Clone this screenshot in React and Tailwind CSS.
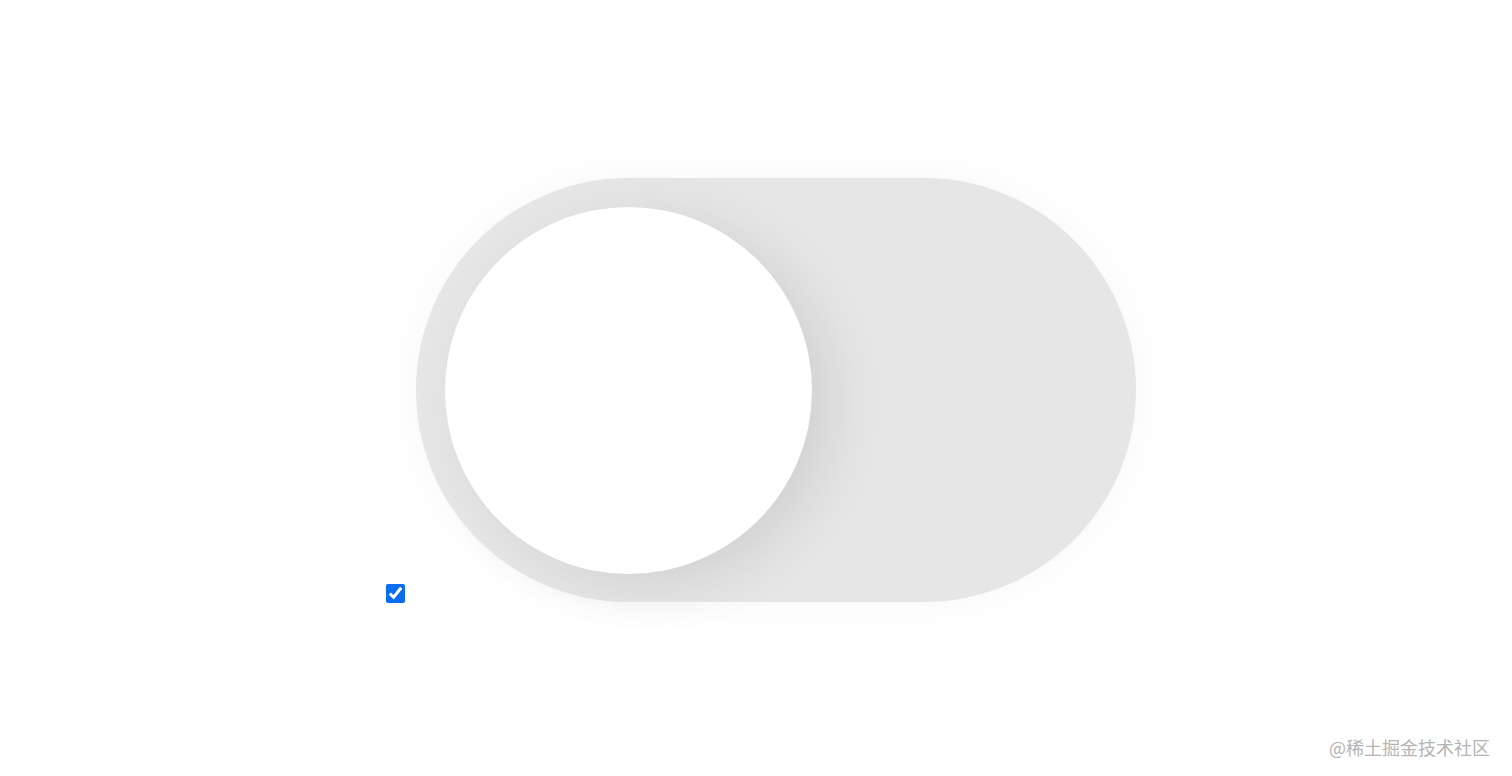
import React, { useState } from 'react';

export default function App() {
  const [on, setOn] = useState(true);

  return (
    <div className="relative w-full h-[776px] bg-white overflow-hidden font-['Noto_Sans','Noto_Sans_CJK_SC',sans-serif]">
      <div className="flex h-full items-center justify-center pl-[10px] pt-[4px]">
        <div className="flex items-end">
          <input
            type="checkbox"
            checked={on}
            onChange={(e) => setOn(e.target.checked)}
            className="m-0 mr-[11px] mb-[-1px] w-[19px] h-[19px] accent-[#0b6cf0]"
          />
          {/* track */}
          <label
            className="flex items-center w-[720px] h-[424px] rounded-full bg-[#e6e6e6] pl-[29px] shadow-[0_0_40px_rgba(0,0,0,0.035)] cursor-pointer"
            onClick={() => setOn((v) => !v)}
          >
            <span className="block w-[367px] h-[367px] rounded-full bg-white shadow-[22px_12px_55px_rgba(0,0,0,0.09)]" />
          </label>
        </div>
      </div>

      <div className="absolute right-[22px] bottom-[20px] text-[18px] leading-none text-[#b4b4b4] font-['Noto_Sans_CJK_SC',sans-serif]">
        @稀土掘金技术社区
      </div>
    </div>
  );
}
